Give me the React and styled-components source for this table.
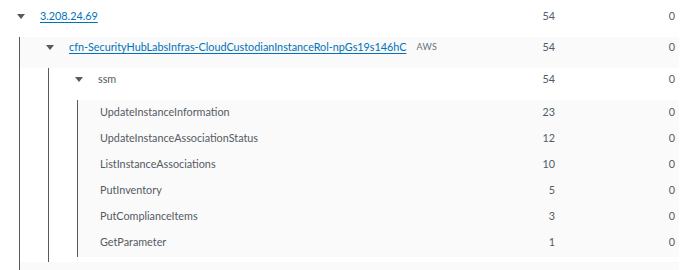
import React from 'react';
import styled, { createGlobalStyle } from 'styled-components';

const GlobalStyle = createGlobalStyle`
    body {
        margin: 0;
        background: #ffffff;
        font-family: Lato, "Open Sans", sans-serif;
        font-size: 10.8px;
        color: #545b64;
    }
`

const Tree = styled.div`
    width: 679px;
`
const Row = styled.div`
    display: flex;
    align-items: flex-start;
    box-sizing: border-box;
    height: ${(p) => p.$h}px;
    padding-top: ${(p) => p.$pt || 0}px;
    padding-left: ${(p) => p.$pl || 0}px;
    padding-right: 4px;
    line-height: 16px;
    background: ${(p) => (p.$shaded ? '#fafafa' : 'transparent')};
`
const Label = styled.div`
    flex: 1;
    display: flex;
    align-items: center;
    min-width: 0;
    white-space: nowrap;
`
const Caret = styled.svg`
    width: 8px;
    height: 5px;
    margin-right: 15px;
    flex-shrink: 0;
    fill: #545b64;
`
const Link = styled.a`
    color: #0073bb;
    text-decoration: underline;
    text-underline-offset: 2px;
    cursor: pointer;
`
const Badge = styled.span`
    margin-left: 10px;
    font-size: 9px;
    color: #687078;
    letter-spacing: 0.3px;
`
const Num = styled.div`
    width: 120px;
    text-align: right;
    flex-shrink: 0;
`
const Group = styled.div`
    margin-left: ${(p) => p.$ml}px;
    border-left: 1px solid #545b64;
    padding-bottom: ${(p) => p.$pb || 0}px;
    background: ${(p) => (p.$shaded ? '#fafafa' : 'transparent')};
`

const Toggle = () => (
    <Caret viewBox="0 0 8 5">
        <polygon points="0,0 8,0 4,5" />
    </Caret>
)

const calls = [
    { name: 'UpdateInstanceInformation', count: 23, errors: 0 },
    { name: 'UpdateInstanceAssociationStatus', count: 12, errors: 0 },
    { name: 'ListInstanceAssociations', count: 10, errors: 0 },
    { name: 'PutInventory', count: 5, errors: 0 },
    { name: 'PutComplianceItems', count: 3, errors: 0 },
    { name: 'GetParameter', count: 1, errors: 0 },
]

const App = () => {
    return (
        <Tree>
            <GlobalStyle />
            <Row $h={37} $pt={8} $pl={17}>
                <Label>
                    <Toggle />
                    <Link>3.208.24.69</Link>
                </Label>
                <Num>54</Num>
                <Num>0</Num>
            </Row>
            <Group $ml={19}>
                <Row $h={31} $pt={2} $pl={26} $shaded>
                    <Label>
                        <Toggle />
                        <Link>cfn-SecurityHubLabsInfras-CloudCustodianInstanceRol-npGs19s146hC</Link>
                        <Badge>AWS</Badge>
                    </Label>
                    <Num>54</Num>
                    <Num>0</Num>
                </Row>
                <Group $ml={28} $pb={5}>
                    <Row $h={32} $pt={3} $pl={26}>
                        <Label>
                            <Toggle />
                            ssm
                        </Label>
                        <Num>54</Num>
                        <Num>0</Num>
                    </Row>
                    <Group $ml={28} $pb={1} $shaded>
                        {calls.map((c) => (
                            <Row key={c.name} $h={26} $pt={4} $pl={22}>
                                <Label>{c.name}</Label>
                                <Num>{c.count}</Num>
                                <Num>{c.errors}</Num>
                            </Row>
                        ))}
                    </Group>
                </Group>
                <Row $h={8} $shaded />
            </Group>
        </Tree>
    );
};

export default App;
